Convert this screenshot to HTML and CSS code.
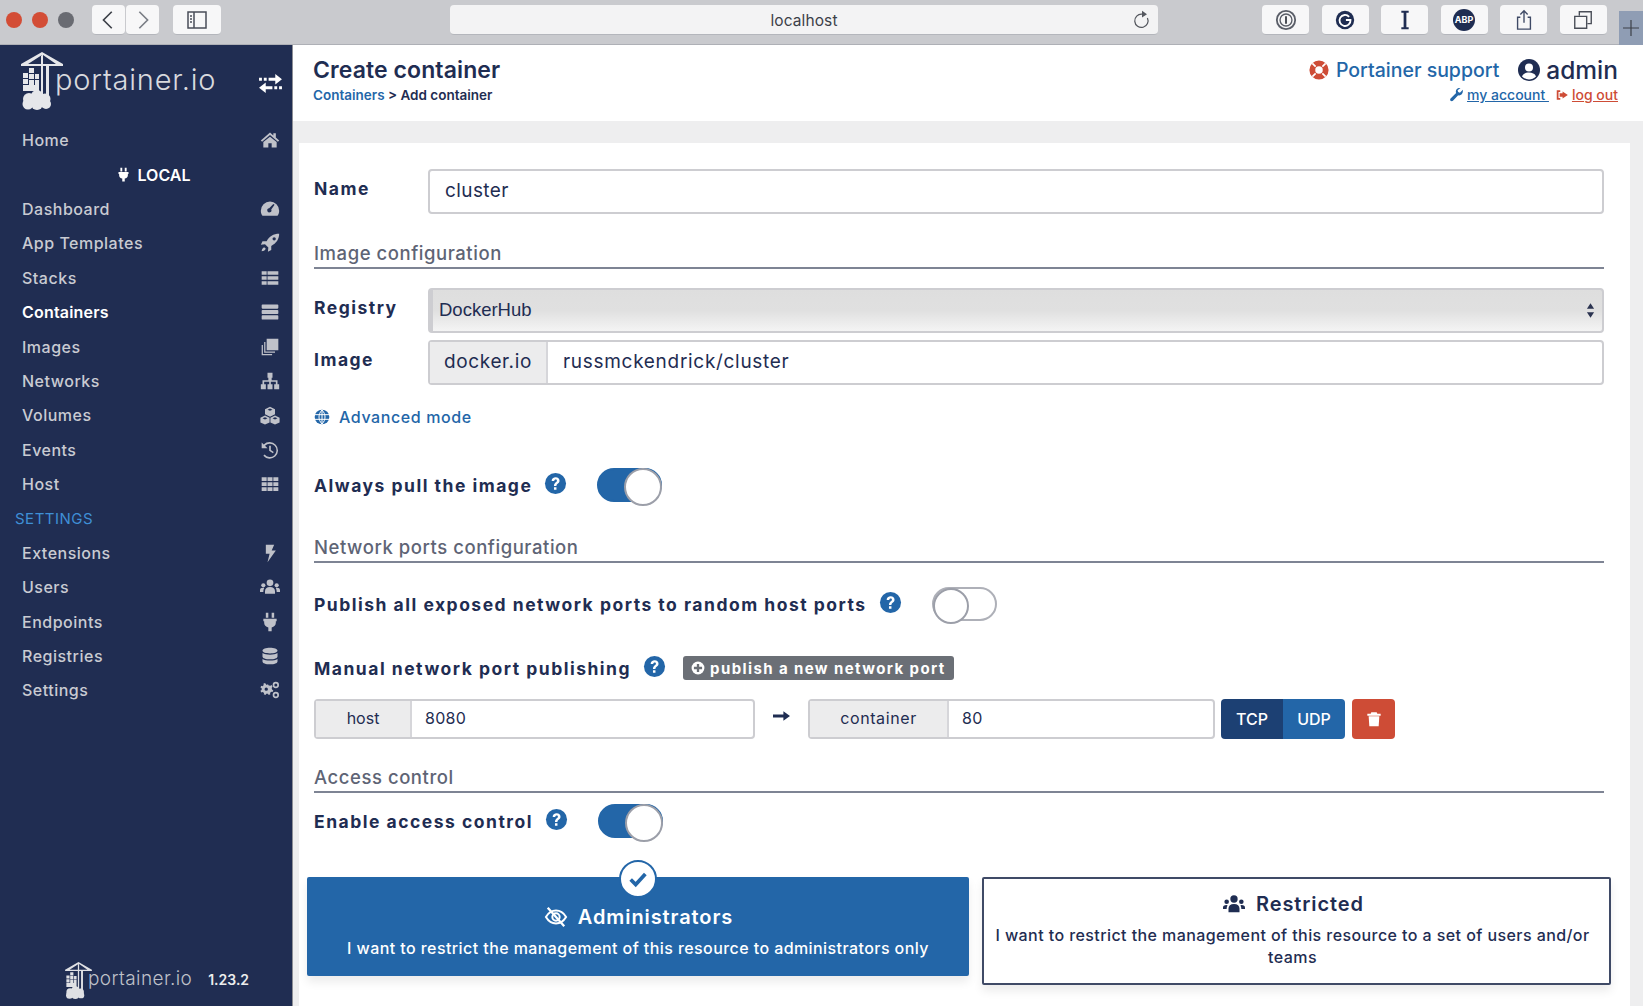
FILE: index.html
```html
<!DOCTYPE html>
<html lang="en">
<head>
  <meta charset="UTF-8">
  <meta name="viewport" content="width=device-width, initial-scale=1.0">
  <title>Create container</title>
  <link rel="stylesheet" href="styles.css">
</head>
<body>
  <svg class="defs" aria-hidden="true">
    <symbol id="crane" viewBox="0 0 42 58">
      <path d="M21 0 L42 12 L42 14 L28 14 L28 44 L25 44 L25 14 L22 14 L22 44 L20 44 L20 14 L0 14 L0 12 Z M21 3 L7 12 L20 12 L20 3 Z M22 3 L22 12 L35 12 Z" fill-rule="evenodd" />
      <path d="M8 16h5v5H8zM2 21h5v5H2zM8 22h5v5H8zM14 22h4v5h-4zM2 27h5v5H2zM8 28h5v5H8zM14 28h4v5h-4zM2 33h16v6H2z" />
      <circle cx="8" cy="47" r="6" />
      <circle cx="16" cy="44" r="6" />
      <circle cx="24" cy="47" r="5.500" />
      <circle cx="25" cy="52" r="5" />
      <circle cx="16" cy="52" r="6" />
      <circle cx="7" cy="52" r="5.500" />
    </symbol>
    <symbol id="help" viewBox="0 0 24 24">
      <circle cx="12" cy="12" r="11" fill="#2366a8" />
      <path d="M8 9.300c0-2.400 1.800-3.800 4.200-3.800s4 1.400 4 3.500c0 3-3.200 3-3.200 5.500h-2.600c0-3.600 3.100-3.800 3.100-5.400 0-.8-.5-1.300-1.300-1.300-.9 0-1.500.6-1.500 1.500z M10.400 15.800h2.600v2.700h-2.600z" fill="#fff" />
    </symbol>
    <symbol id="plug" viewBox="0 0 24 24">
      <path d="M7 1h3v6H7zM14 1h3v6h-3zM4 8h16v3h-1v2c0 3-2 5-5 5.500V23h-4v-4.500C7 18 5 16 5 13v-2H4z" />
    </symbol>
  </svg>

  <div class="browser-bar">
    <div class="lights">
      <span class="light red"></span>
      <span class="light red"></span>
      <span class="light grey"></span>
    </div>
    <div class="nav-btns">
      <span class="tool-btn nav-btn"><svg class="tool-ico" viewBox="0 0 24 24"><path d="M15 3 L6 12 L15 21" fill="none" stroke="#3c4048" stroke-width="1.800" /></svg></span>
      <span class="tool-btn nav-btn"><svg class="tool-ico" viewBox="0 0 24 24"><path d="M8 3 L17 12 L8 21" fill="none" stroke="#7a7e86" stroke-width="1.800" /></svg></span>
    </div>
    <span class="tool-btn side-btn"><svg class="tool-ico wide" viewBox="0 0 24 20"><path d="M3 2h18v16H3zM9 2v16M5 6h2M5 9h2M5 12h2" fill="none" stroke="#4a4e58" stroke-width="1.500" /></svg></span>
    <div class="url-bar">
      <span class="url-text">localhost</span>
      <svg class="reload" viewBox="0 0 24 24"><path d="M18.500 9.500 A8 8 0 1 1 12 5" fill="none" stroke="#55585f" stroke-width="1.500" /><path d="M12 1 L18 5 L12 9 Z" fill="#55585f" /></svg>
    </div>
    <div class="ext-btns">
      <span class="tool-btn ext-btn"><svg class="tool-ico" viewBox="0 0 24 24"><circle cx="12" cy="12" r="10" fill="none" stroke="#5a5e68" stroke-width="2" /><circle cx="12" cy="12" r="6.500" fill="none" stroke="#5a5e68" stroke-width="1.500" /><path d="M11 8h2v8h-2z" fill="#3c4048" /></svg></span>
      <span class="tool-btn ext-btn"><svg class="tool-ico" viewBox="0 0 24 24"><circle cx="12" cy="12" r="10" fill="#1f2d52" /><path d="M16.500 8.500A6 6 0 1 0 18 12h-5" fill="none" stroke="#fff" stroke-width="2" /></svg></span>
      <span class="tool-btn ext-btn"><svg class="tool-ico" viewBox="0 0 24 24"><path d="M8 2h8v2h-2.500v16H16v2H8v-2h2.500V4H8z" fill="#1f2d52" /></svg></span>
      <span class="tool-btn ext-btn"><span class="abp">ABP</span></span>
      <span class="tool-btn ext-btn"><svg class="tool-ico" viewBox="0 0 24 24"><path d="M8 9H5v13h14V9h-3M12 15V2M8 6l4-4 4 4" fill="none" stroke="#3f4a66" stroke-width="1.500" /></svg></span>
      <span class="tool-btn ext-btn"><svg class="tool-ico" viewBox="0 0 24 24"><path d="M8 7V3h13v13h-4M3 8h13v13H3z" fill="none" stroke="#4a4e58" stroke-width="1.500" /></svg></span>
    </div>
    <div class="new-tab"><svg viewBox="0 0 20 20"><path d="M10 2v16M2 10h16" stroke="#3c4048" stroke-width="1.200" /></svg></div>
  </div>

  <div class="app">
    <aside class="sidebar">
      <div class="brand">
        <svg class="brand-crane"><use href="#crane" /></svg>
        <span class="brand-name">portainer.io</span>
        <svg class="swap" viewBox="0 0 24 22"><path d="M0 5h3v3H0zM5 5h3v3H5zM10 5h7V1l7 5.500-7 5.500V8h-7zM24 14h-3v3h3zM19 14h-3v3h3zM14 14H7v-4L0 15.500 7 21v-4h7z" /></svg>
      </div>
      <nav class="side-nav">
        <a class="side-item">Home
          <svg class="side-ico" viewBox="0 0 24 24"><path d="M12 3 L1 12.500 L2.500 14 L12 6 L21.500 14 L23 12.500 L19 9V4h-3v2.500z" /><path d="M12 8 L4 14.500V21h6v-5h4v5h6v-6.500z" /></svg>
        </a>
        <div class="side-endpoint"><svg class="plug-ico"><use href="#plug" /></svg>LOCAL</div>
        <a class="side-item">Dashboard
          <svg class="side-ico" viewBox="0 0 24 24"><path d="M12 3A11 11 0 0 0 1 14c0 2.500.7 4.500 2 6h18c1.300-1.500 2-3.500 2-6A11 11 0 0 0 12 3zM11 11l5-5 1.500 1-4 5.500a2.500 2.500 0 1 1-2.500-1.500z" fill-rule="evenodd" /></svg>
        </a>
        <a class="side-item">App Templates
          <svg class="side-ico" viewBox="0 0 24 24"><path d="M23 1c-7 0-12 3-15 9H3l-2 4 5-.5 4 4-.5 5 4-2v-5c6-3 9.500-8 9.500-14.500zM17 5a2 2 0 1 1 0 4 2 2 0 0 1 0-4zM5 17c-2 1-3 3-3 5 2 0 4-1 5-3z" fill-rule="evenodd" /></svg>
        </a>
        <a class="side-item">Stacks
          <svg class="side-ico" viewBox="0 0 24 24"><path d="M2 4h6v4H2zM9 4h13v4H9zM2 10h6v4H2zM9 10h13v4H9zM2 16h6v4H2zM9 16h13v4H9z" /></svg>
        </a>
        <a class="side-item active">Containers
          <svg class="side-ico" viewBox="0 0 24 24"><path d="M3 3h18a1 1 0 0 1 1 1v3a1 1 0 0 1-1 1H3a1 1 0 0 1-1-1V4a1 1 0 0 1 1-1zM3 9.500h18a1 1 0 0 1 1 1v3a1 1 0 0 1-1 1H3a1 1 0 0 1-1-1v-3a1 1 0 0 1 1-1zM3 16h18a1 1 0 0 1 1 1v3a1 1 0 0 1-1 1H3a1 1 0 0 1-1-1v-3a1 1 0 0 1 1-1z" /></svg>
        </a>
        <a class="side-item">Images
          <svg class="side-ico" viewBox="0 0 24 24"><path d="M8 2h14v14H8zM5 6v13h13v-1.500H6.500V6zM2 9.500V22h12.500v-1.500h-11V9.500z" /></svg>
        </a>
        <a class="side-item">Networks
          <svg class="side-ico" viewBox="0 0 24 24"><path d="M9 2h6v6h-1v3h7v5h2v6h-6v-6h2v-3h-6v3h2v6H9v-6h2v-3H5v3h2v6H1v-6h2v-5h7V8H9z" /></svg>
        </a>
        <a class="side-item">Volumes
          <svg class="side-ico" viewBox="0 0 24 24"><path d="M12 2l6 3v6l-6 3-6-3V5zM12 4.200L9 5.600l3 1.400 3-1.400zM6 12.500l5.500 2.700v5.800L6 23.500 0.500 21v-5.800zM6 14.700l-3 1.300 3 1.400 3-1.400zM18 12.500l5.500 2.700v5.800L18 23.500 12.500 21v-5.800zM18 14.700l-3 1.300 3 1.400 3-1.400z" fill-rule="evenodd" /></svg>
        </a>
        <a class="side-item">Events
          <svg class="side-ico" viewBox="0 0 24 24"><path d="M2 3l2.500 2.500A10 10 0 1 1 4 19l1.500-1.500A8 8 0 1 0 6 7l3 3H2z" /><path d="M11 7h2v5l3.500 2.500-1 1.500-4.500-3z" /></svg>
        </a>
        <a class="side-item">Host
          <svg class="side-ico" viewBox="0 0 24 24"><path d="M2 4h6v4.500H2zM9 4h6v4.500H9zM16 4h6v4.500h-6zM2 10h6v4.500H2zM9 10h6v4.500H9zM16 10h6v4.500h-6zM2 16h6v4.500H2zM9 16h6v4.500H9zM16 16h6v4.500h-6z" /></svg>
        </a>
        <div class="side-heading">SETTINGS</div>
        <a class="side-item">Extensions
          <svg class="side-ico" viewBox="0 0 24 24"><path d="M7 2h10l-3 7h5L9 23l2.500-10H7z" /></svg>
        </a>
        <a class="side-item">Users
          <svg class="side-ico" viewBox="0 0 24 24"><circle cx="12" cy="7" r="4" /><circle cx="4" cy="10" r="2.500" /><circle cx="20" cy="10" r="2.500" /><path d="M6 20v-3c0-3 2-5 6-5s6 2 6 5v3zM0 18v-2c0-2 1-3 4-3l1 .5c-.6 1-1 2-1 4.500zM24 18v-2c0-2-1-3-4-3l-1 .5c.6 1 1 2 1 4.500z" /></svg>
        </a>
        <a class="side-item">Endpoints
          <svg class="side-ico"><use href="#plug" /></svg>
        </a>
        <a class="side-item">Registries
          <svg class="side-ico" viewBox="0 0 24 24"><path d="M12 2c5 0 9 1.300 9 3.500S17 9 12 9 3 7.700 3 5.500 7 2 12 2zM3 8.500C5 10 8.500 10.500 12 10.500s7-.5 9-2v4c0 2-4 3.500-9 3.500s-9-1.500-9-3.500zM3 15.500C5 17 8.500 17.500 12 17.500s7-.5 9-2v3c0 2-4 3.500-9 3.500s-9-1.500-9-3.500z" /></svg>
        </a>
        <a class="side-item">Settings
          <svg class="side-ico" viewBox="0 0 24 24"><path d="M8 6l1.500-1 1 1.500 2 .5 1.500-1 1 2-1 1.500.5 2 1.500 1-1 2-1.500-.5-1.500 1.500.5 1.500-2 1-1-1.500h-2l-1 1.500-2-1 .5-1.500L3 14.500l-1.500.5-1-2L2 12V10L.5 9l1-2L3 7.500 4.500 6 4 4.500l2-1z M7.500 9a2 2 0 1 0 0 4 2 2 0 0 0 0-4z" fill-rule="evenodd" /><circle cx="19" cy="6" r="2.800" fill="none" stroke="#bfc1c9" stroke-width="2" /><circle cx="19" cy="18" r="2.800" fill="none" stroke="#bfc1c9" stroke-width="2" /></svg>
        </a>
      </nav>
      <div class="side-footer">
        <svg class="foot-crane"><use href="#crane" /></svg>
        <span class="foot-name">portainer.io</span>
        <span class="foot-version">1.23.2</span>
      </div>
    </aside>

    <main class="main">
      <header class="page-header">
        <div>
          <h1 class="page-title">Create container</h1>
          <div class="crumbs"><a class="crumb-link">Containers</a> &gt; Add container</div>
        </div>
        <div class="user-box">
          <div class="user-top">
            <svg class="support-ico" viewBox="0 0 24 24"><circle cx="12" cy="12" r="8" fill="none" stroke="#ce4c36" stroke-width="7" /><path d="M4 4l4 4M20 4l-4 4M4 20l4-4M20 20l-4-4" stroke="#fff" stroke-width="2" /></svg>
            <a class="support-link">Portainer support</a>
            <svg class="user-ico" viewBox="0 0 24 24"><circle cx="12" cy="12" r="11" fill="#1f2d52" /><circle cx="12" cy="9.500" r="4" fill="#fff" /><path d="M5 18.500c1-3 4-4 7-4s6 1 7 4c-2 2-4.500 3-7 3s-5-1-7-3z" fill="#fff" /></svg>
            <span class="user-name">admin</span>
          </div>
          <div class="user-links">
            <svg class="mini-ico blue" viewBox="0 0 24 24"><path d="M22 3l-5 5-3-1-1-3 5-4c-4-1-8 2-8 6 0 1 0 2 .5 2.500L1 18c-1 1-1 3 0 4s3 1 4 0l9-9.500c4 1.500 9-2 8-9.500z" /></svg>
            <a class="link-account">my account&nbsp;</a>
            <svg class="mini-ico red" viewBox="0 0 24 24"><path d="M9 4H3v16h6v-3H6V7h3zM13 6l9 6-9 6v-3H8V9h5z" /></svg>
            <a class="link-logout">log out</a>
          </div>
        </div>
      </header>

      <div class="content">
        <form class="widget">
          <div class="form-row name-row">
            <label class="form-label">Name</label>
            <div class="text-field">cluster</div>
          </div>

          <div class="section-title">Image configuration</div>
          <div class="form-row registry-row">
            <label class="form-label">Registry</label>
            <div class="select-field">DockerHub
              <svg class="select-arrows" viewBox="0 0 10 18"><path d="M5 1l4 6H1zM5 17l-4-6h8z" /></svg>
            </div>
          </div>
          <div class="form-row image-row">
            <label class="form-label">Image</label>
            <div class="input-group big">
              <span class="addon docker-addon">docker.io</span>
              <span class="group-value image-value">russmckendrick/cluster</span>
            </div>
          </div>
          <div class="advanced-row">
            <svg class="globe" viewBox="0 0 24 24"><circle cx="12" cy="12" r="11" /><path d="M1.500 8.500h21M1.500 15.500h21M12 1.500c-6 6-6 15 0 21M12 1.500c6 6 6 15 0 21M12 1.500v21" fill="none" stroke="#fff" stroke-width="1.500" /></svg>
            <a class="advanced-link">Advanced mode</a>
          </div>
          <div class="check-row always-row">
            <span class="check-label">Always pull the image</span>
            <svg class="help-ico"><use href="#help" /></svg>
            <span class="toggle on"></span>
          </div>

          <div class="section-title network-title">Network ports configuration</div>
          <div class="check-row publish-row">
            <span class="check-label">Publish all exposed network ports to random host ports</span>
            <svg class="help-ico"><use href="#help" /></svg>
            <span class="toggle"></span>
          </div>
          <div class="manual-row">
            <span class="check-label">Manual network port publishing</span>
            <svg class="help-ico"><use href="#help" /></svg>
            <span class="add-badge">
              <svg viewBox="0 0 24 24"><circle cx="12" cy="12" r="11" fill="#fff" /><path d="M10 5h4v5h5v4h-5v5h-4v-5H5v-4h5z" fill="#6b6f76" /></svg>
              publish a new network port
            </span>
          </div>
          <div class="port-row">
            <div class="input-group host-group">
              <span class="addon host-addon">host</span>
              <span class="group-value">8080</span>
            </div>
            <svg class="port-arrow" viewBox="0 0 18 12"><path d="M0 4.500h11V1l7 5-7 5V7.500H0z" /></svg>
            <div class="input-group container-group">
              <span class="addon container-addon">container</span>
              <span class="group-value">80</span>
            </div>
            <div class="proto-group">
              <span class="proto active">TCP</span>
              <span class="proto">UDP</span>
            </div>
            <span class="del-btn">
              <svg viewBox="0 0 24 24"><path d="M8 2h8l1 2h5v3H2V4h5zM4 8h16l-1 15H5z" /></svg>
            </span>
          </div>

          <div class="section-title access-title">Access control</div>
          <div class="check-row enable-row">
            <span class="check-label">Enable access control</span>
            <svg class="help-ico"><use href="#help" /></svg>
            <span class="toggle on"></span>
          </div>

          <div class="box-row">
            <div class="box-card selected">
              <span class="box-check"><svg viewBox="0 0 24 24"><path d="M4 12.500l5.500 5.500L20 6.500" fill="none" stroke="#2366a8" stroke-width="4" /></svg></span>
              <div class="box-title">
                <svg viewBox="0 0 24 24"><path d="M3 2l18 20" stroke="#fff" stroke-width="2.500" /><path d="M1 12c3-5 7-7 11-7s8 2 11 7c-3 5-7 7-11 7s-8-2-11-7z M12 8a4 4 0 1 0 0 8 4 4 0 0 0 0-8z" fill="none" stroke="#fff" stroke-width="2.200" /></svg>
                Administrators
              </div>
              <div class="box-text">I want to restrict the management of this resource to administrators only</div>
            </div>
            <div class="box-card">
              <div class="box-title">
                <svg viewBox="0 0 24 24"><circle cx="12" cy="6.500" r="4" /><circle cx="4" cy="9.500" r="2.500" /><circle cx="20" cy="9.500" r="2.500" /><path d="M6 21v-4c0-3 2-5 6-5s6 2 6 5v4zM0 17.500V16c0-2 1-3 4-3l1 .5c-.6 1-1 2-1 4zM24 17.500V16c0-2-1-3-4-3l-1 .5c.6 1 1 2 1 4z" /></svg>
                Restricted
              </div>
              <div class="box-text">I want to restrict the management of this resource to a set of users and/or teams</div>
            </div>
          </div>
        </form>
      </div>
    </main>
  </div>
</body>
</html>
```

FILE: styles.css
```css
* { box-sizing: border-box; }
html, body { margin: 0; height: 100%; }
body { height: 1006px; overflow: hidden; font-family: Inter, "Open Sans", sans-serif; color: #1f2d52; background: #fff; display: flex; flex-direction: column; }
a { text-decoration: none; }
.defs { width: 0; height: 0; position: absolute; }

/* browser chrome */
.browser-bar { height: 45px; flex: none; display: flex; align-items: flex-start; background: #c9cace; border-bottom: 1px solid #aeb0b6; padding-top: 5px; padding-left: 6px; }
.lights { display: flex; gap: 10px; margin-top: 7px; }
.light { width: 16px; height: 16px; border-radius: 50%; }
.light.red { background: #d34d36; }
.light.grey { background: #696b72; }
.nav-btns { display: flex; gap: 1px; margin-left: 18px; }
.tool-btn { height: 30px; background: #f7f7f8; border-radius: 4px; border-bottom: 1px solid #b4b6bc; display: flex; align-items: center; justify-content: center; }
.nav-btn { width: 33px; }
.side-btn { width: 48px; margin-left: 14px; }
.tool-ico { width: 22px; height: 22px; }
.tool-ico.wide { width: 24px; height: 20px; }
.url-bar { width: 708px; height: 30px; margin-left: 229px; background: #f3f3f4; border-radius: 4px; border-bottom: 1px solid #b4b6bc; position: relative; text-align: center; font-size: 15.5px; line-height: 32px; letter-spacing: 0.1px; color: #3c4048; }
.reload { position: absolute; right: 6px; top: 5px; width: 20px; height: 20px; }
.ext-btns { display: flex; gap: 12.5px; margin-left: 104px; }
.ext-btn { width: 47px; }
.abp { width: 22px; height: 22px; border-radius: 50%; background: #1f2d52; color: #fff; font-size: 9px; font-weight: 700; display: flex; align-items: center; justify-content: center; }
.new-tab { width: 24px; height: 34px; margin-left: auto; margin-top: 6px; background: #8f9db4; display: flex; align-items: center; justify-content: center; flex: none; overflow: hidden; }
.new-tab svg { width: 20px; height: 20px; flex: none; }

.app { flex: 1; display: flex; min-height: 0; }

/* sidebar */
.sidebar { width: 293px; flex: none; background: #202d52; border-right: 1px solid #8d8f96; color: #c9cbd2; display: flex; flex-direction: column; }
.brand { height: 78px; display: flex; align-items: flex-start; position: relative; padding: 7px 0 0 21px; }
.brand-crane { width: 42px; height: 58px; fill: #e6e7ea; flex: none; }
.brand-name { font-size: 29px; font-weight: 300; color: #d8d9de; margin-left: -8px; margin-top: 10px; letter-spacing: 0.8px; }
.swap { position: absolute; left: 259px; top: 28px; width: 23px; height: 21px; fill: #fff; }
.side-nav { display: flex; flex-direction: column; }
.side-item, .side-endpoint, .side-heading { height: 34.4px; flex: none; display: flex; align-items: center; font-size: 16px; font-weight: 500; padding-left: 22px; }
.side-item { justify-content: space-between; padding-right: 12px; letter-spacing: 0.5px; }
.side-item.active { color: #fff; font-weight: 600; letter-spacing: 0.2px; }
.side-endpoint { justify-content: center; color: #fff; font-weight: 600; padding-left: 14px; gap: 7px; }
.plug-ico { width: 15px; height: 17px; fill: #fff; }
.side-heading { color: #3f8fd6; padding-left: 15px; font-size: 15px; font-weight: 400; letter-spacing: 0.5px; }
.side-ico { width: 20px; height: 20px; fill: #bfc1c9; }
.side-footer { margin-top: auto; height: 44px; display: flex; align-items: flex-start; padding-left: 65px; color: #bfc1c9; }
.foot-crane { width: 27px; height: 37px; fill: #dfe0e4; flex: none; }
.foot-name { font-size: 19px; font-weight: 300; margin-top: 5px; margin-left: -4px; letter-spacing: 0.4px; }
.foot-version { font-size: 14px; font-weight: 600; color: #eceded; margin-left: 16px; margin-top: 9px; }

/* page header */
.main { flex: 1; min-width: 0; display: flex; flex-direction: column; background: #eeeeef; }
.page-header { height: 76px; flex: none; background: #fff; display: flex; justify-content: space-between; padding: 10px 25px 0 20px; }
.page-title { margin: 0; font-size: 23px; font-weight: 600; line-height: 30px; letter-spacing: 0.1px; }
.crumbs { font-size: 13.5px; font-weight: 600; line-height: 18px; margin-top: 1px; }
.crumb-link { color: #2366a8; }
.user-box { display: flex; flex-direction: column; align-items: flex-end; }
.user-top { display: flex; align-items: center; height: 30px; }
.support-ico { width: 20px; height: 20px; margin-right: 7px; }
.support-link { font-size: 19.5px; font-weight: 500; color: #2366a8; }
.user-ico { width: 24px; height: 24px; margin-left: 18px; margin-right: 5px; }
.user-name { font-size: 24.5px; font-weight: 500; }
.user-links { display: flex; align-items: center; font-size: 14px; font-weight: 500; margin-top: 1px; line-height: 18px; }
.mini-ico { width: 14px; height: 14px; margin-right: 3px; }
.mini-ico.blue { fill: #2366a8; }
.mini-ico.red { fill: #ce4c36; margin-left: 6px; }
.link-account { color: #2366a8; text-decoration: underline; }
.link-logout { color: #ce4c36; text-decoration: underline; }

/* form */
.content { flex: 1; min-height: 0; padding: 22px 13px 0 6px; }
.widget { background: #fff; height: 100%; padding: 26px 26px 0 15px; }
.form-row { display: flex; align-items: center; }
.form-label { width: 114px; flex: none; font-size: 17.5px; font-weight: 700; letter-spacing: 1.5px; }
.name-row .form-label { margin-top: -6px; }
.registry-row .form-label, .image-row .form-label { margin-top: -6px; }
.text-field, .select-field { flex: 1; height: 45px; border: 2px solid #cdcdd1; border-radius: 4px; display: flex; align-items: center; font-size: 19px; letter-spacing: 0.4px; padding: 0 0 2px 15px; }
.select-field { position: relative; font-family: "Liberation Sans", Arial, sans-serif; font-size: 18.5px; letter-spacing: 0; background: linear-gradient(#dedede, #e0e0e0 50%, #f4f4f4); padding: 0 0 1px 6px; border-left-width: 5px; }
.select-arrows { position: absolute; right: 7px; top: 12px; width: 9px; height: 17px; fill: #2b3350; }
.section-title { height: 27px; margin-top: 28px; border-bottom: 2px solid #7e8494; color: #5e6475; font-size: 18.5px; font-weight: 500; line-height: 23px; letter-spacing: 0.55px; }
.registry-row { margin-top: 19px; }
.image-row { margin-top: 7px; }
.input-group { display: flex; border: 2px solid #cdcdd1; border-radius: 4px; height: 40px; background: #fff; }
.input-group.big { flex: 1; height: 45px; font-size: 19px; letter-spacing: 0.7px; }
.input-group.big .addon, .input-group.big .group-value { padding-bottom: 3px; letter-spacing: 0.6px; }
.input-group.big .image-value { letter-spacing: 0.7px; }
.addon { background: #ececed; border-right: 2px solid #d6d6da; display: flex; align-items: center; justify-content: center; flex: none; padding-bottom: 2px; }
.group-value { display: flex; align-items: center; padding-left: 13px; padding-bottom: 2px; letter-spacing: 0.3px; }
.docker-addon { width: 118px; }
.image-value { padding-left: 15px; }
.advanced-row { margin-top: 20px; height: 24px; display: flex; align-items: center; gap: 9px; }
.globe { width: 16px; height: 16px; fill: #2366a8; }
.advanced-link { color: #2366a8; font-size: 16px; font-weight: 500; letter-spacing: 0.6px; }
.check-row { height: 34px; display: flex; align-items: center; }
.check-label { font-size: 17.5px; font-weight: 700; letter-spacing: 1.5px; }
.help-ico { width: 23px; height: 23px; margin-left: 12px; flex: none; position: relative; top: -2px; }
.toggle { width: 65px; height: 34px; border-radius: 17px; margin-left: 30px; flex: none; border: 2px solid #aeb0b8; background: #fff; display: block; position: relative; }
.toggle::after { content: ""; position: absolute; left: -1px; top: -1px; width: 32px; height: 32px; border-radius: 50%; background: #fff; border: 2px solid #9c9fa9; }
.toggle.on { background: #2366a8; border-color: #2366a8; }
.toggle.on::after { left: auto; right: -2px; top: -2px; width: 34px; height: 34px; }
.always-row { margin-top: 39px; }
.network-title { margin-top: 34px; }
.publish-row { margin-top: 24px; }
.manual-row { margin-top: 35px; height: 24px; display: flex; align-items: center; }
.add-badge { margin-left: 17px; height: 24px; background: #6b6f76; color: #fff; border-radius: 3px; font-size: 15px; font-weight: 700; letter-spacing: 1.4px; display: flex; align-items: center; gap: 5px; padding: 0 8px 0 8px; }
.add-badge svg { width: 14px; height: 14px; }
.port-row { margin-top: 19px; height: 40px; display: flex; align-items: stretch; font-size: 16px; }
.host-group { width: 441px; }
.host-addon { width: 96px; }
.port-arrow { width: 17px; height: 12px; fill: #1f2d52; margin: 11px 18px 0 18px; flex: none; }
.container-group { width: 407px; }
.container-addon { width: 139px; letter-spacing: 0.6px; }
.proto-group { display: flex; margin-left: 6px; border-radius: 4px; overflow: hidden; color: #fff; font-weight: 500; }
.proto { width: 62px; display: flex; align-items: center; justify-content: center; background: #2366a8; }
.proto.active { background: #1c4073; }
.del-btn { width: 43px; margin-left: 7px; background: #ce4c36; border-radius: 4px; display: flex; align-items: center; justify-content: center; }
.del-btn svg { width: 16px; height: 16px; fill: #fff; }
.access-title { margin-top: 27px; }
.enable-row { margin-top: 11px; }
.box-row { margin: 39px -7px 0 -7px; display: flex; align-items: flex-start; gap: 13px; }
.box-card { flex: 1; position: relative; height: 108px; border: 2px solid #3f4a66; border-radius: 2px; text-align: center; padding: 12px 14px 0 6px; box-shadow: 0 6px 10px rgba(0, 0, 0, 0.08); }
.box-card.selected { flex: none; width: 662px; height: 99px; background: #2366a8; border-color: #2366a8; color: #fff; padding: 25px 10px 0; }
.box-check { position: absolute; left: 50%; top: -19px; margin-left: -19px; width: 38px; height: 38px; border-radius: 50%; background: #fff; border: 2px solid #2366a8; display: flex; align-items: center; justify-content: center; }
.box-check svg { width: 22px; height: 22px; }
.box-title { display: flex; align-items: center; justify-content: center; gap: 9px; font-size: 20px; font-weight: 600; letter-spacing: 0.9px; line-height: 26px; }
.box-title svg { width: 26px; height: 22px; fill: currentColor; }
.box-text { font-size: 16px; font-weight: 500; line-height: 22px; margin-top: 7px; letter-spacing: 0.42px; }
```
